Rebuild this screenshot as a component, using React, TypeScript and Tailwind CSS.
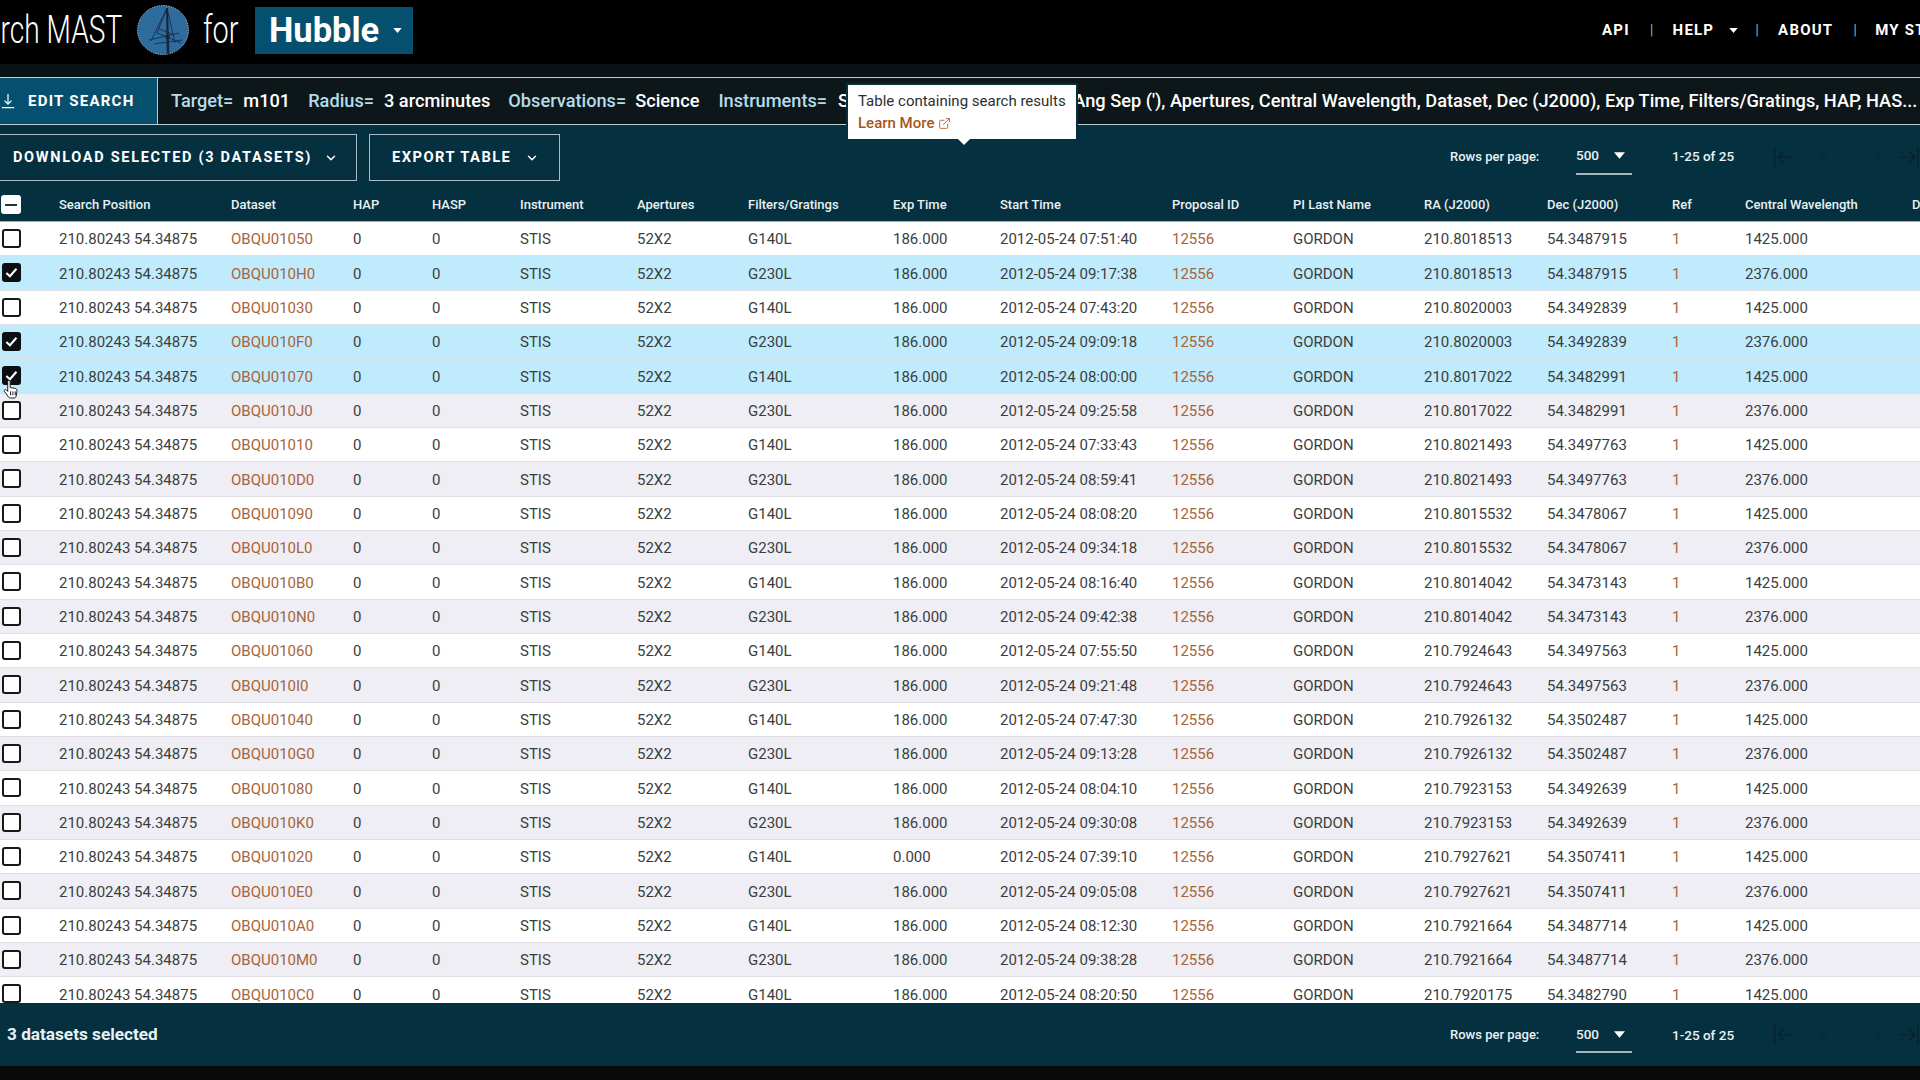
import React from "react";
import { ChevronDown, ExternalLink } from "lucide-react";

const GRID = "grid grid-cols-[59px_172px_122px_79px_88px_117px_111px_145px_107px_172px_121px_131px_123px_125px_73px_167px_100px]";

const raw: [string, string, string, string, string?][] = [
  ["01050", "07:51:40", "210.8018513", "54.3487915"],
  ["010H0", "09:17:38", "210.8018513", "54.3487915"],
  ["01030", "07:43:20", "210.8020003", "54.3492839"],
  ["010F0", "09:09:18", "210.8020003", "54.3492839"],
  ["01070", "08:00:00", "210.8017022", "54.3482991"],
  ["010J0", "09:25:58", "210.8017022", "54.3482991"],
  ["01010", "07:33:43", "210.8021493", "54.3497763"],
  ["010D0", "08:59:41", "210.8021493", "54.3497763"],
  ["01090", "08:08:20", "210.8015532", "54.3478067"],
  ["010L0", "09:34:18", "210.8015532", "54.3478067"],
  ["010B0", "08:16:40", "210.8014042", "54.3473143"],
  ["010N0", "09:42:38", "210.8014042", "54.3473143"],
  ["01060", "07:55:50", "210.7924643", "54.3497563"],
  ["010I0", "09:21:48", "210.7924643", "54.3497563"],
  ["01040", "07:47:30", "210.7926132", "54.3502487"],
  ["010G0", "09:13:28", "210.7926132", "54.3502487"],
  ["01080", "08:04:10", "210.7923153", "54.3492639"],
  ["010K0", "09:30:08", "210.7923153", "54.3492639"],
  ["01020", "07:39:10", "210.7927621", "54.3507411", "0.000"],
  ["010E0", "09:05:08", "210.7927621", "54.3507411"],
  ["010A0", "08:12:30", "210.7921664", "54.3487714"],
  ["010M0", "09:38:28", "210.7921664", "54.3487714"],
  ["010C0", "08:20:50", "210.7920175", "54.3482790"],
];
const selected = new Set([1, 3, 4]);

const headers = ["Search Position", "Dataset", "HAP", "HASP", "Instrument", "Apertures", "Filters/Gratings", "Exp Time", "Start Time", "Proposal ID", "PI Last Name", "RA (J2000)", "Dec (J2000)", "Ref", "Central Wavelength", "D"];

function Caret({ className = "" }: { className?: string }) {
  return <svg viewBox="0 0 10 6" className={`shrink-0 ${className}`}><path d="M0 0h10L5 6z" fill="currentColor" /></svg>;
}

function Logo() {
  return (
    <svg viewBox="0 0 52 50" className="w-[52px] h-[50px] shrink-0">
      <ellipse cx="26" cy="25" rx="25.5" ry="24.5" fill="#2d6c9c" stroke="#a9c6d8" strokeWidth="1" strokeDasharray="1.2 1.2" />
      <g stroke="#1a3356" fill="none" strokeWidth="1">
        <path d="M30 3 20 28M30 3 38 38M30 3 14 36" />
        <path d="M12 35 42 28M17 39 45 35M20 28 44 38M22 24 38 30" />
      </g>
      <path d="M29 3h2l1.4 46h-2.6z" fill="#14283a" />
      <circle cx="30.5" cy="32" r="2.2" fill="#14283a" />
    </svg>
  );
}

function Box({ checked }: { checked: boolean }) {
  return checked ? (
    <span className="ml-[2px] -mt-[2px] w-[19px] h-[19px] rounded-[3px] bg-[#0b0f12] flex items-center justify-center">
      <svg viewBox="0 0 16 16" className="w-[15px] h-[15px]"><path d="M2.5 8.5 6.3 12l7-8" fill="none" stroke="#fff" strokeWidth="2.2" /></svg>
    </span>
  ) : (
    <span className="ml-[2px] -mt-[2px] w-[19px] h-[19px] rounded-[3px] border-2 border-[#16181a] bg-white block" />
  );
}

function Pager() {
  return (
    <div className="flex items-center text-[#0b2029] ml-[37px] shrink-0">
      <svg viewBox="0 0 24 24" className="w-[24px] h-[24px] shrink-0" fill="none" stroke="currentColor" strokeWidth="1.2"><path d="M4 2v20M22 12H7M13 6l-6 6 6 6" /></svg>
      <svg viewBox="0 0 24 24" className="w-[20px] h-[20px] ml-[19px] shrink-0" fill="none" stroke="currentColor" strokeWidth="1.2"><path d="M15 6l-6 6 6 6" /></svg>
      <svg viewBox="0 0 24 24" className="w-[20px] h-[20px] ml-[34px] shrink-0" fill="none" stroke="currentColor" strokeWidth="1.2"><path d="M9 6l6 6-6 6" /></svg>
      <svg viewBox="0 0 24 24" className="w-[24px] h-[24px] ml-[10px] shrink-0" fill="none" stroke="currentColor" strokeWidth="1.2"><path d="M2 12h15M11 6l6 6-6 6M20 2v20" /></svg>
    </div>
  );
}

function Pagination() {
  return (
    <div className="flex items-center w-[470px] shrink-0 text-[13px] font-medium text-[#eaf1f4] relative">
      <span className="w-[126px] shrink-0 whitespace-nowrap">Rows per page:</span>
      <div className="w-[56px] shrink-0 h-[36px] border-b-2 border-[#a9b4b9] flex items-center text-[13.5px]">
        <span>500</span>
        <Caret className="w-[11px] h-[7px] ml-[15px] text-white" />
      </div>
      <span className="ml-[40px] shrink-0 text-[13.5px] whitespace-nowrap">1-25 of 25</span>
      <Pager />
    </div>
  );
}

export default function App() {
  return (
    <div className="relative w-[1920px] h-[1080px] overflow-hidden bg-black flex flex-col font-['Roboto',sans-serif]">
      {/* Top header */}
      <header className="h-[64px] shrink-0 bg-black flex items-center text-white">
        <span className="block ml-[-120px] w-[257px] shrink-0 pr-[20px] text-right text-[38px] leading-none whitespace-nowrap font-light scale-x-[0.74] origin-right mt-[-4px]">Search MAST</span>
        <span className="mt-[-4px]"><Logo /></span>
        <span className="block ml-[14px] w-[34px] shrink-0 text-[38px] leading-none font-light scale-x-[0.76] origin-left mt-[-4px]">for</span>
        <div className="ml-[18px] w-[158px] h-[47px] bg-[#06506f] flex items-center pl-[14px] mt-[-3px]">
          <span className="text-[34.5px] font-bold leading-none">Hubble</span>
          <Caret className="w-[9px] h-[5px] ml-[14px]" />
        </div>
        <nav className="ml-auto flex items-center text-[15px] font-bold tracking-[1.2px] whitespace-nowrap mt-[-3px] w-[318px] shrink-0">
          <span>API</span>
          <span className="ml-[20px] font-normal text-[#9aa0a3]">|</span>
          <span className="ml-[18px]">HELP</span>
          <Caret className="w-[9px] h-[5px] ml-[15px]" />
          <span className="ml-[17px] font-normal text-[#9aa0a3]">|</span>
          <span className="ml-[18px]">ABOUT</span>
          <span className="ml-[20px] font-normal text-[#9aa0a3]">|</span>
          <span className="ml-[17px]">MY STUDIES</span>
        </nav>
      </header>

      {/* Strip above chips */}
      <div className="h-[13px] shrink-0 bg-[#0a1216]" />

      {/* Search chip bar */}
      <div className="relative h-[48px] shrink-0 bg-[#0d1619] border-y border-[#b9cdd3] flex items-center text-[18.2px] font-medium whitespace-nowrap overflow-visible">
        <div className="w-[158px] h-full shrink-0 bg-[#06506f] border-r border-[#b9cdd3] flex items-center text-white">
          <svg viewBox="0 0 16 18" className="ml-[1px] w-[14px] h-[16px] shrink-0" fill="none" stroke="currentColor" strokeWidth="1.4"><path d="M8 1v11M4 8.5 8 12.5 12 8.5M1 16.5h14" /></svg>
          <span className="ml-[13px] text-[15px] font-bold tracking-[1.25px]">EDIT SEARCH</span>
        </div>
        <span className="ml-[13px] text-[#b5dcea]">Target=</span>
        <span className="ml-[10px] text-white">m101</span>
        <span className="ml-[18px] text-[#b5dcea]">Radius=</span>
        <span className="ml-[10px] text-white">3 arcminutes</span>
        <span className="ml-[18px] text-[#b5dcea]">Observations=</span>
        <span className="ml-[9px] text-white">Science</span>
        <span className="ml-[19px] text-[#b5dcea]">Instruments=</span>
        <span className="ml-[11px] text-white">STIS</span>
        <span className="ml-[197px] text-white">Ang Sep ('), Apertures, Central Wavelength, Dataset, Dec (J2000), Exp Time, Filters/Gratings, HAP, HAS...</span>

        {/* Tooltip */}
        <div className="absolute left-[848px] top-[7px] w-[228px] h-[54px] bg-white z-10 shadow-[0_0_0_2px_#04303f] text-[15px] font-normal text-[#2c2f31] pl-[10px] pt-[5px] leading-[22px]">
          <div className="whitespace-nowrap">Table containing search results</div>
          <div className="flex items-center font-medium text-[#a9561b]">
            Learn More
            <ExternalLink className="ml-[4px] w-[13px] h-[13px]" strokeWidth={1.5} />
          </div>
          <svg viewBox="0 0 12 6" className="absolute left-[110px] top-[54px] w-[12px] h-[6px]"><path d="M0 0h12L6 6z" fill="#fff" /></svg>
        </div>
      </div>

      {/* Toolbar */}
      <div className="h-[65px] shrink-0 bg-[#04303f] flex items-center text-white">
        <button className="ml-[-4px] w-[361px] h-[47px] border border-[#a9bcc3] flex items-center pl-[16px] text-[14.5px] font-bold tracking-[1.7px] whitespace-nowrap">
          DOWNLOAD SELECTED (3 DATASETS)
          <ChevronDown className="ml-[12px] w-[14px] h-[14px]" strokeWidth={2.5} />
        </button>
        <button className="ml-[12px] w-[191px] h-[47px] border border-[#a9bcc3] flex items-center pl-[22px] text-[14.7px] font-bold tracking-[1.45px] whitespace-nowrap">
          EXPORT TABLE
          <ChevronDown className="ml-[14px] w-[14px] h-[14px]" strokeWidth={2.5} />
        </button>
        <div className="ml-auto -mt-[2px]"><Pagination /></div>
      </div>

      {/* Table header */}
      <div className={`${GRID} h-[32px] pb-[2px] shrink-0 bg-[#04303f] items-center text-[13px] font-medium text-[#eaf1f4] border-b border-[#8fb2bd] whitespace-nowrap`}>
        <span className="ml-[1px] w-[20px] h-[19px] rounded-[3px] bg-white flex items-center justify-center">
          <span className="w-[12px] h-[2px] bg-[#26343a]" />
        </span>
        {headers.map((h) => <span key={h}>{h}</span>)}
      </div>

      {/* Rows */}
      <div className="relative h-[781px] shrink-0 overflow-hidden bg-white">
        {raw.map((r, i) => {
          const sel = selected.has(i);
          const even = i % 2 === 0;
          return (
            <div
              key={r[0]}
              className={`${GRID} h-[34.33px] pt-[2px] items-center text-[15px] text-[#3b3e40] border-b border-[#dfdfe4] whitespace-nowrap ${sel ? "bg-[#bfebfd]" : even ? "bg-white" : "bg-[#eeeef4]"}`}
            >
              <Box checked={sel} />
              <span>210.80243 54.34875</span>
              <span className="text-[#a8643a]">OBQU{r[0]}</span>
              <span>0</span>
              <span>0</span>
              <span>STIS</span>
              <span>52X2</span>
              <span>{even ? "G140L" : "G230L"}</span>
              <span>{r[4] ?? "186.000"}</span>
              <span>2012-05-24 {r[1]}</span>
              <span className="text-[#a8643a]">12556</span>
              <span>GORDON</span>
              <span>{r[2]}</span>
              <span>{r[3]}</span>
              <span className="text-[#a8643a]">1</span>
              <span>{even ? "1425.000" : "2376.000"}</span>
              <span />
            </div>
          );
        })}
        {/* Hand cursor */}
        <svg viewBox="0 0 18 22" className="absolute left-[3px] top-[157px] w-[17px] h-[21px]">
          <path d="M5 2.5c0-1.8 2.6-1.8 2.6 0V9l5 .8c1.6.3 2.4 1.4 2.2 3l-.8 5c-.2 1.3-1 2.2-2.4 2.2H8c-1 0-1.7-.4-2.3-1.2L1.6 13c-.9-1.3.7-2.7 1.9-1.6L5 13z" fill="#fff" stroke="#111" strokeWidth="1" />
          <path d="M8 13v4M10.5 13v4M13 13v4" stroke="#111" strokeWidth="1" />
        </svg>
      </div>

      {/* Footer */}
      <div className="h-[63px] shrink-0 bg-[#04303f] flex items-center text-white">
        <span className="ml-[7px] text-[17.2px] font-bold text-[#eaf1f4]">3 datasets selected</span>
        <div className="ml-auto mt-[1px]"><Pagination /></div>
      </div>
      <div className="flex-1 bg-[#0a0a0a]" />
    </div>
  );
}
